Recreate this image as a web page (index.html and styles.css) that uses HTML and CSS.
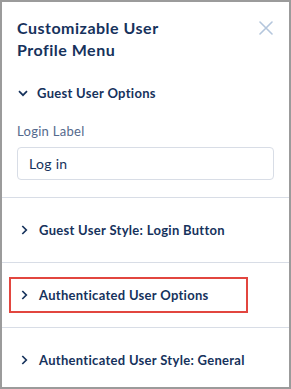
FILE: index.html
```html
<!DOCTYPE html>
<html>
<head>
<meta charset="utf-8">
<link rel="stylesheet" href="styles.css">
</head>
<body>
<div class="panel">
  <div class="header">
    <h1 class="title">Customizable User Profile Menu</h1>
    <button class="close" aria-label="Close">
      <svg width="14" height="14" viewBox="0 0 14 14"><path d="M1 1L13 13M13 1L1 13" stroke="#b4c6dc" stroke-width="1.6" stroke-linecap="round"/></svg>
    </button>
  </div>
  <div class="open-section">
    <div class="sec-head">
      <svg class="chev-down" width="10" height="7" viewBox="0 0 10 7"><path d="M1 1.2L5 5.2L9 1.2" fill="none" stroke="#16325c" stroke-width="1.7"/></svg>
      <span>Guest User Options</span>
    </div>
    <label class="field-label">Login Label</label>
    <div class="input">Log in</div>
  </div>
  <div class="section">
    <div class="sec-head">
      <svg class="chev-right" width="7" height="10" viewBox="0 0 7 10"><path d="M1.3 1L5.3 5L1.3 9" fill="none" stroke="#16325c" stroke-width="1.7"/></svg>
      <span>Guest User Style: Login Button</span>
    </div>
  </div>
  <div class="section">
    <div class="sec-head highlighted">
      <svg class="chev-right" width="7" height="10" viewBox="0 0 7 10"><path d="M1.3 1L5.3 5L1.3 9" fill="none" stroke="#16325c" stroke-width="1.7"/></svg>
      <span>Authenticated User Options</span>
    </div>
  </div>
  <div class="section">
    <div class="sec-head">
      <svg class="chev-right" width="7" height="10" viewBox="0 0 7 10"><path d="M1.3 1L5.3 5L1.3 9" fill="none" stroke="#16325c" stroke-width="1.7"/></svg>
      <span>Authenticated User Style: General</span>
    </div>
  </div>
</div>
</body>
</html>
```
FILE: styles.css
```css
html, body {
  margin: 0;
  padding: 0;
  background: #fff;
}
.panel {
  box-sizing: border-box;
  width: 291px;
  height: 389px;
  border: 2px solid #9b9b9b;
  background: #fff;
  font-family: Lato, "Liberation Sans", sans-serif;
  color: #16325c;
  overflow: hidden;
}
.header {
  display: flex;
  justify-content: space-between;
  align-items: flex-start;
  padding: 15px 16px 0 15px;
}
.title {
  margin: 0;
  width: 190px;
  font-size: 16px;
  line-height: 22px;
  font-weight: 700;
  letter-spacing: 0.5px;
  color: #16325c;
}
.close {
  border: 0;
  background: none;
  padding: 0;
  margin: 4px 0 0 0;
  width: 14px;
  height: 14px;
  display: block;
}
.close svg { display: block; }
.open-section {
  padding: 22px 15px 17px 15px;
}
.sec-head {
  display: flex;
  align-items: center;
  gap: 9px;
  font-size: 13px;
  line-height: 20px;
  font-weight: 700;
  letter-spacing: 0.3px;
  color: #16325c;
}
.chev-down { margin-left: 1px; }
.chev-right { margin-left: 4px; margin-right: 2px; }
.field-label {
  display: block;
  margin-top: 19px;
  font-size: 13px;
  line-height: 18px;
  letter-spacing: 0.3px;
  color: #54698d;
}
.input {
  margin-top: 7px;
  box-sizing: border-box;
  height: 33px;
  border: 1px solid #d8dde6;
  border-radius: 4px;
  padding: 0 11px;
  font-size: 14px;
  line-height: 31px;
  letter-spacing: 0.3px;
  color: #16325c;
}
.section {
  border-top: 1px solid #d8dde6;
  padding: 22px 15px 22px 15px;
}
.highlighted {
  position: relative;
}
.highlighted::after {
  content: "";
  position: absolute;
  left: -8px;
  top: -8px;
  width: 239px;
  height: 36px;
  border: 2px solid #e2463f;
  box-sizing: border-box;
}
```
